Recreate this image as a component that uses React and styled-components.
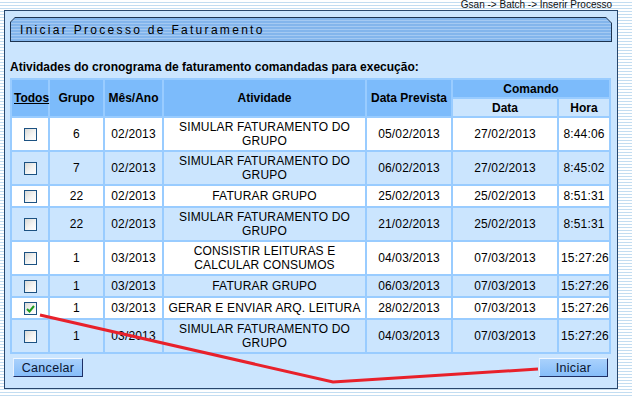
import React from 'react';
import styled, { createGlobalStyle } from 'styled-components';

const GlobalStyle = createGlobalStyle`
  * { box-sizing: border-box; }
  body {
    margin: 0;
    font-family: "Liberation Sans", Arial, sans-serif;
    background: repeating-linear-gradient(#ffffff 0 2px, #c3ddf1 2px 3px);
  }
`;

const Page = styled.div`
  position: relative;
  width: 632px;
  height: 396px;
  padding: 0 14px 0 4px;
`;

const Breadcrumb = styled.div`
  height: 10px;
  padding-right: 6px;
  text-align: right;
  font-size: 10px;
  line-height: 10px;
  color: #111;
`;

const Panel = styled.div`
  height: 379px;
  border: 1px solid #27466c;
  background: #cbe5fe;
  padding: 6px 5px 0 5px;
`;

const TitleFrame = styled.div`
  height: 25px;
  padding: 1px;
  background: #1c3350;
  clip-path: polygon(5px 0, calc(100% - 6px) 0, 100% 6px, 100% 100%, 0 100%, 0 5px);
`;

const TitleBar = styled.div`
  height: 100%;
  display: flex;
  align-items: center;
  padding-left: 9px;
  background: repeating-linear-gradient(#83b5ec 0 2px, #a4c9f2 2px 3px);
  clip-path: polygon(4px 0, calc(100% - 5px) 0, 100% 5px, 100% 100%, 0 100%, 0 4px);
  font-size: 12px;
  letter-spacing: 2.3px;
  color: #000;
`;

const Heading = styled.div`
  margin-top: 18px;
  font-size: 12px;
  line-height: 14px;
  font-weight: bold;
  color: #000;
`;

const Table = styled.table`
  margin-top: 4px;
  width: 601px;
  table-layout: fixed;
  border-collapse: separate;
  border-spacing: 2px;
  background: #99ccff;
  font-size: 12px;
  line-height: 14px;
`;

const Th = styled.th`
  height: 17px;
  padding: 0 2px;
  background: ${(p) => (p.$sub ? '#cbe5fe' : '#7cbbfb')};
  font-weight: bold;
  color: #000;
  text-align: center;
`;

const TodosLink = styled.span`
  text-decoration: underline;
  color: #000;
`;

const Row = styled.tr`
  background: ${(p) => (p.$alt ? '#cbe5fe' : '#ffffff')};
`;

const Td = styled.td`
  height: 20px;
  padding: 2px;
  text-align: center;
  color: #000;
  letter-spacing: 0.15px;
`;

const Box = styled.span`
  display: inline-flex;
  align-items: center;
  justify-content: center;
  width: 13px;
  height: 13px;
  vertical-align: middle;
  border: 1px solid #1c5282;
  background: linear-gradient(135deg, #d9d9d6 0%, #f4f4f2 55%, #ffffff 100%);
`;

const Footer = styled.div`
  display: flex;
  justify-content: space-between;
  margin-top: 4px;
  padding: 0 4px 0 3px;
`;

const Button = styled.button`
  height: 19px;
  width: ${(p) => p.$w}px;
  padding: 0;
  font-family: "Liberation Sans", Arial, sans-serif;
  font-size: 12.5px;
  letter-spacing: 0.3px;
  color: #0a1430;
  background: linear-gradient(#a9d1fc, #86bdf9);
  border: 1px solid;
  border-color: #f2f8ff #1e2f66 #1e2f66 #e6f1ff;
`;

const Overlay = styled.svg`
  position: absolute;
  left: 0;
  top: 0;
  pointer-events: none;
`;

const rows = [
  ['6', '02/2013', 'SIMULAR FATURAMENTO DO GRUPO', '05/02/2013', '27/02/2013', '8:44:06'],
  ['7', '02/2013', 'SIMULAR FATURAMENTO DO GRUPO', '06/02/2013', '27/02/2013', '8:45:02'],
  ['22', '02/2013', 'FATURAR GRUPO', '25/02/2013', '25/02/2013', '8:51:31'],
  ['22', '02/2013', 'SIMULAR FATURAMENTO DO GRUPO', '21/02/2013', '25/02/2013', '8:51:31'],
  ['1', '03/2013', 'CONSISTIR LEITURAS E CALCULAR CONSUMOS', '04/03/2013', '07/03/2013', '15:27:26'],
  ['1', '03/2013', 'FATURAR GRUPO', '06/03/2013', '07/03/2013', '15:27:26'],
  ['1', '03/2013', 'GERAR E ENVIAR ARQ. LEITURA', '28/02/2013', '07/03/2013', '15:27:26', true],
  ['1', '03/2013', 'SIMULAR FATURAMENTO DO GRUPO', '04/03/2013', '07/03/2013', '15:27:26'],
];

const Checkbox = ({ checked }) => (
  <Box>
    {checked && (
      <svg width="9" height="8" viewBox="0 0 9 8">
        <path d="M1 4 L3.5 6.5 L8 1" fill="none" stroke="#1e9b1e" strokeWidth="2" />
      </svg>
    )}
  </Box>
);

const App = () => (
  <>
    <GlobalStyle />
    <Page>
      <Breadcrumb>Gsan -&gt; Batch -&gt; Inserir Processo</Breadcrumb>
      <Panel>
        <TitleFrame>
          <TitleBar>Iniciar Processo de Faturamento</TitleBar>
        </TitleFrame>
        <Heading>Atividades do cronograma de faturamento comandadas para execução:</Heading>
        <Table>
          <colgroup>
            <col style={{ width: 36 }} />
            <col style={{ width: 53 }} />
            <col style={{ width: 57 }} />
            <col style={{ width: 201 }} />
            <col style={{ width: 84 }} />
            <col style={{ width: 104 }} />
            <col style={{ width: 50 }} />
          </colgroup>
          <thead>
            <tr>
              <Th rowSpan={2}><TodosLink>Todos</TodosLink></Th>
              <Th rowSpan={2}>Grupo</Th>
              <Th rowSpan={2}>Mês/Ano</Th>
              <Th rowSpan={2}>Atividade</Th>
              <Th rowSpan={2}>Data Prevista</Th>
              <Th colSpan={2}>Comando</Th>
            </tr>
            <tr>
              <Th $sub>Data</Th>
              <Th $sub>Hora</Th>
            </tr>
          </thead>
          <tbody>
            {rows.map((r, i) => (
              <Row key={i} $alt={i % 2 === 1}>
                <Td><Checkbox checked={r[6]} /></Td>
                <Td>{r[0]}</Td>
                <Td>{r[1]}</Td>
                <Td>{r[2]}</Td>
                <Td>{r[3]}</Td>
                <Td>{r[4]}</Td>
                <Td>{r[5]}</Td>
              </Row>
            ))}
          </tbody>
        </Table>
        <Footer>
          <Button $w={70}>Cancelar</Button>
          <Button $w={69}>Iniciar</Button>
        </Footer>
      </Panel>
      <Overlay width="632" height="396">
        <polyline
          points="40,315 333,382 538,369"
          fill="none"
          stroke="#e8212b"
          strokeWidth="3"
        />
      </Overlay>
    </Page>
  </>
);

export default App;
